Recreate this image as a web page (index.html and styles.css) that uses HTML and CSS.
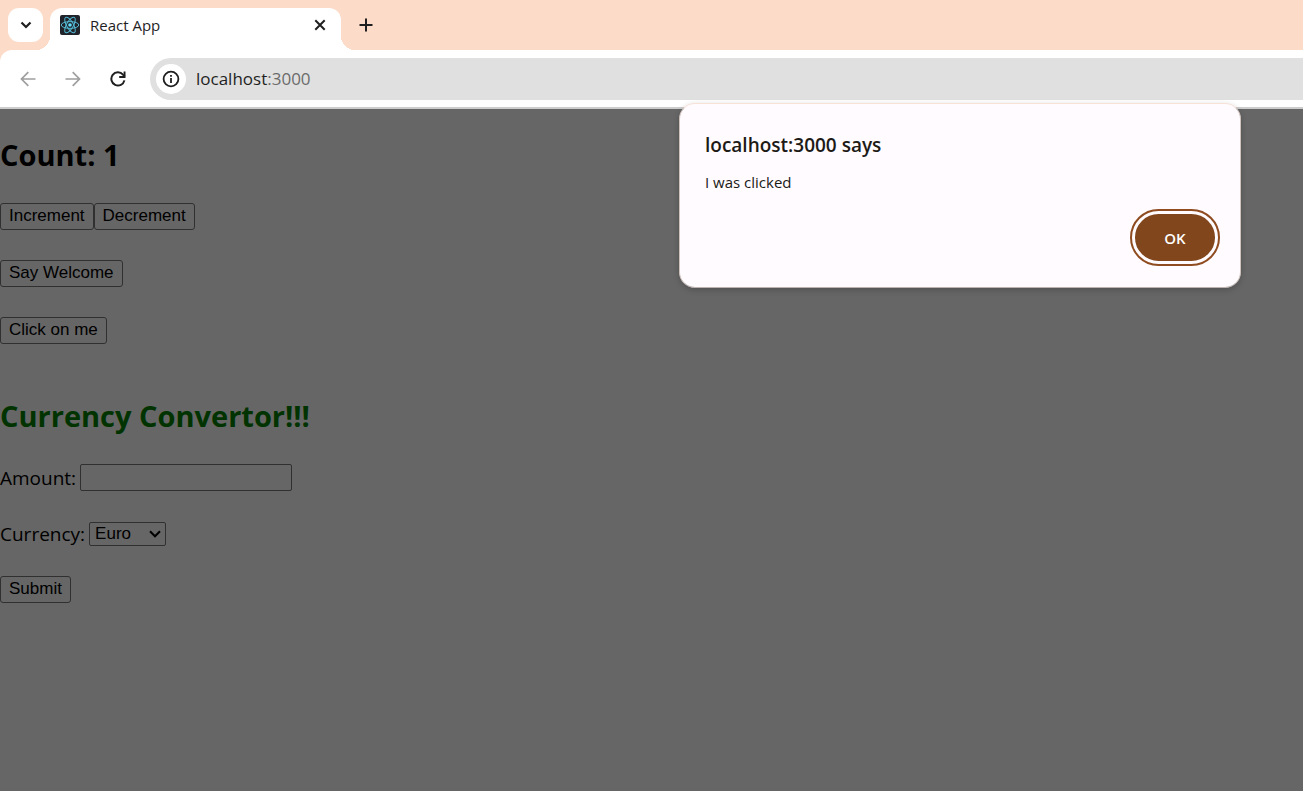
FILE: index.html
```html
<!DOCTYPE html>
<html lang="en">
<head>
<meta charset="utf-8">
<title>React App</title>
<link rel="stylesheet" href="styles.css">
</head>
<body>
<div class="browser">
  <header class="tabstrip">
    <button class="tab-search" type="button" aria-label="Search tabs">
      <svg width="12" height="8" viewBox="0 0 12 8"><path d="M1.500 1.500 6 6l4.500-4.500" fill="none" stroke="#1f1f1f" stroke-width="2.200"/></svg>
    </button>
    <div class="tab">
      <svg class="favicon" width="20" height="20" viewBox="0 0 20 20">
        <rect width="20" height="20" rx="2" fill="#20232a"/>
        <g fill="none" stroke="#53b9d3" stroke-width="1">
          <ellipse cx="10" cy="10" rx="8.800" ry="3.400"/>
          <ellipse cx="10" cy="10" rx="8.800" ry="3.400" transform="rotate(60 10 10)"/>
          <ellipse cx="10" cy="10" rx="8.800" ry="3.400" transform="rotate(120 10 10)"/>
        </g>
        <circle cx="10" cy="10" r="1.800" fill="#61dafb"/>
      </svg>
      <span class="tab-title">React App</span>
      <button class="tab-close" type="button" aria-label="Close tab">
        <svg width="12" height="12" viewBox="0 0 12 12"><path d="m1.300 1.300 9.400 9.400M10.700 1.300l-9.400 9.400" stroke="#1f1f1f" stroke-width="2"/></svg>
      </button>
    </div>
    <button class="new-tab" type="button" aria-label="New tab">
      <svg width="14" height="14" viewBox="0 0 14 14"><path d="M7 .5v13M.5 7h13" stroke="#1f1f1f" stroke-width="2"/></svg>
    </button>
  </header>
  <nav class="toolbar">
    <button class="nav-button" type="button" aria-label="Back">
      <svg width="16" height="16" viewBox="0 0 16 16"><path d="M15.500 8H2M8.300 1.200 1.500 8l6.800 6.800" fill="none" stroke="#9e9e9e" stroke-width="1.700"/></svg>
    </button>
    <button class="nav-button" type="button" aria-label="Forward">
      <svg width="16" height="16" viewBox="0 0 16 16"><path d="M.5 8H14M7.700 1.200 14.500 8l-6.800 6.800" fill="none" stroke="#9e9e9e" stroke-width="1.700"/></svg>
    </button>
    <button class="nav-button" type="button" aria-label="Reload">
      <svg width="16" height="16" viewBox="0 0 16 16"><path d="M14.400 9.400A6.600 6.600 0 1 1 13 3.700L14.800 5.600" fill="none" stroke="#1f1f1f" stroke-width="2"/><path d="M15.500.5v6.400H9.200V5h4.400V.5z" fill="#1f1f1f"/></svg>
    </button>
    <div class="omnibox">
      <button class="site-info" type="button" aria-label="View site information">
        <svg width="18" height="18" viewBox="0 0 18 18"><circle cx="9" cy="9" r="7.400" fill="none" stroke="#1f1f1f" stroke-width="1.800"/><path d="M9 8v5M9 5v1.800" stroke="#1f1f1f" stroke-width="1.800"/></svg>
      </button>
      <span class="url">localhost<span class="port">:3000</span></span>
    </div>
  </nav>
  <main class="page">
    <h2 class="heading">Count: 1</h2>
    <div class="row"><button class="control" type="button">Increment</button><button class="control" type="button">Decrement</button></div>
    <div class="row"><button class="control" type="button">Say Welcome</button></div>
    <div class="row"><button class="control" type="button">Click on me</button></div>
    <h2 class="heading converter">Currency Convertor!!!</h2>
    <form>
      <div class="row field"><label for="amount">Amount:</label><input class="amount" id="amount" type="text"></div>
      <div class="row field"><label for="currency">Currency:</label>
        <span class="select-wrap"><select class="currency" id="currency"><option>Euro</option></select>
        <svg class="arrow" width="12" height="8" viewBox="0 0 12 8"><path d="m1 1.300 5 5 5-5" fill="none" stroke="#000" stroke-width="2"/></svg></span>
      </div>
      <div class="row"><button class="control" type="button">Submit</button></div>
    </form>
  </main>
  <section class="dialog" role="alertdialog" aria-labelledby="dialog-title">
    <h1 class="dialog-title" id="dialog-title">localhost:3000 says</h1>
    <p class="dialog-message">I was clicked</p>
    <button class="ok" type="button">OK</button>
  </section>
</div>
</body>
</html>
```
FILE: styles.css
```css
* { box-sizing: border-box; }
body { margin: 0; font-family: "Open Sans", sans-serif; }
button { font: inherit; border: 0; padding: 0; background: none; }
svg { display: block; flex: none; }
.browser { position: relative; display: flex; flex-direction: column; min-height: 100vh; background: #fcdbc8; }
.tabstrip { display: flex; padding: 8px 8px 0; }
.tab-search { display: grid; place-items: center; width: 35px; height: 34px; border-radius: 11px; background: #fff; margin-right: 7px; }
.tab { position: relative; display: flex; align-items: center; width: 291px; height: 42px; padding: 0 14px 8px 10px; border-radius: 12px 12px 0 0; background: #fff; }
.tab::before, .tab::after { content: ""; position: absolute; bottom: 0; width: 14px; height: 14px; }
.tab::before { right: 100%; background: radial-gradient(circle at 0 0, transparent 14px, #fff 14px); }
.tab::after { left: 100%; background: radial-gradient(circle at 100% 0, transparent 14px, #fff 14px); }
.tab-title { flex: 1; margin-left: 10px; font-size: 15px; line-height: 20px; color: #1f1f1f; }
.tab-close { padding: 1px; }
.new-tab { display: grid; place-items: center; width: 34px; height: 34px; margin-left: 8px; }
.toolbar { display: flex; align-items: center; height: 59px; padding-left: 5px; border-bottom: 2px solid #ccc; border-radius: 12px 0 0 0; background: #fff; }
.nav-button { display: grid; place-items: center; width: 45px; height: 34px; flex: none; }
.omnibox { display: flex; align-items: center; flex: 1; height: 42px; margin-left: 10px; padding-left: 6px; border-radius: 21px 0 0 21px; background: #e0e0e0; }
.site-info { display: grid; place-items: center; width: 30px; height: 30px; border-radius: 50%; background: #fff; }
.url { margin-left: 10px; font-size: 17px; line-height: 24px; color: #1f1f1f; }
.port { color: #6b6b6b; }
.page { flex: 1; padding-top: 26px; background: #666; color: #000; font-size: 19px; }
.heading { margin: 0 0 28px; font-size: 29px; line-height: 40px; font-weight: 700; }
.converter { margin: 52px 0 28px; color: #030; }
.row { display: flex; height: 27px; margin-bottom: 30px; }
.control { height: 27px; padding: 0 8px 2px; border: 1px solid #303030; border-radius: 3px; font: 17px/24px "Liberation Sans", Arial, sans-serif; color: #000; }
.field { align-items: center; gap: 4px; margin-bottom: 29px; line-height: 26px; }
.amount { width: 212px; height: 27px; border: 1px solid #303030; border-radius: 2px; background: #666; font: 17px "Liberation Sans", Arial, sans-serif; }
.select-wrap { position: relative; }
.currency { display: block; appearance: none; width: 77px; height: 24px; padding: 0 5px; border: 1px solid #303030; border-radius: 2px; background: #666; color: #000; font: 17px "Liberation Sans", Arial, sans-serif; }
.arrow { position: absolute; right: 5px; top: 8px; pointer-events: none; }
.dialog { position: absolute; top: 103px; right: 62px; width: 562px; display: flex; flex-direction: column; padding: 28px 22px 23px 25px; border: 1px solid; border-color: #f7e2d8 #cfc3be #bdb4b1; border-radius: 16px; background: #fffbff; box-shadow: 0 2px 6px #0003; color: #201a17; }
.dialog-title { margin: 0; font-size: 19px; line-height: 26px; font-weight: 600; }
.dialog-message { margin: 14px 0 19px; font-size: 15px; line-height: 20px; }
.ok { align-self: flex-end; width: 86px; height: 53px; border: 3px solid #fffbff; border-radius: 27px; outline: 2px solid #8f4c20; background: #81461c; color: #fff; font-size: 15px; font-weight: 600; }
```
